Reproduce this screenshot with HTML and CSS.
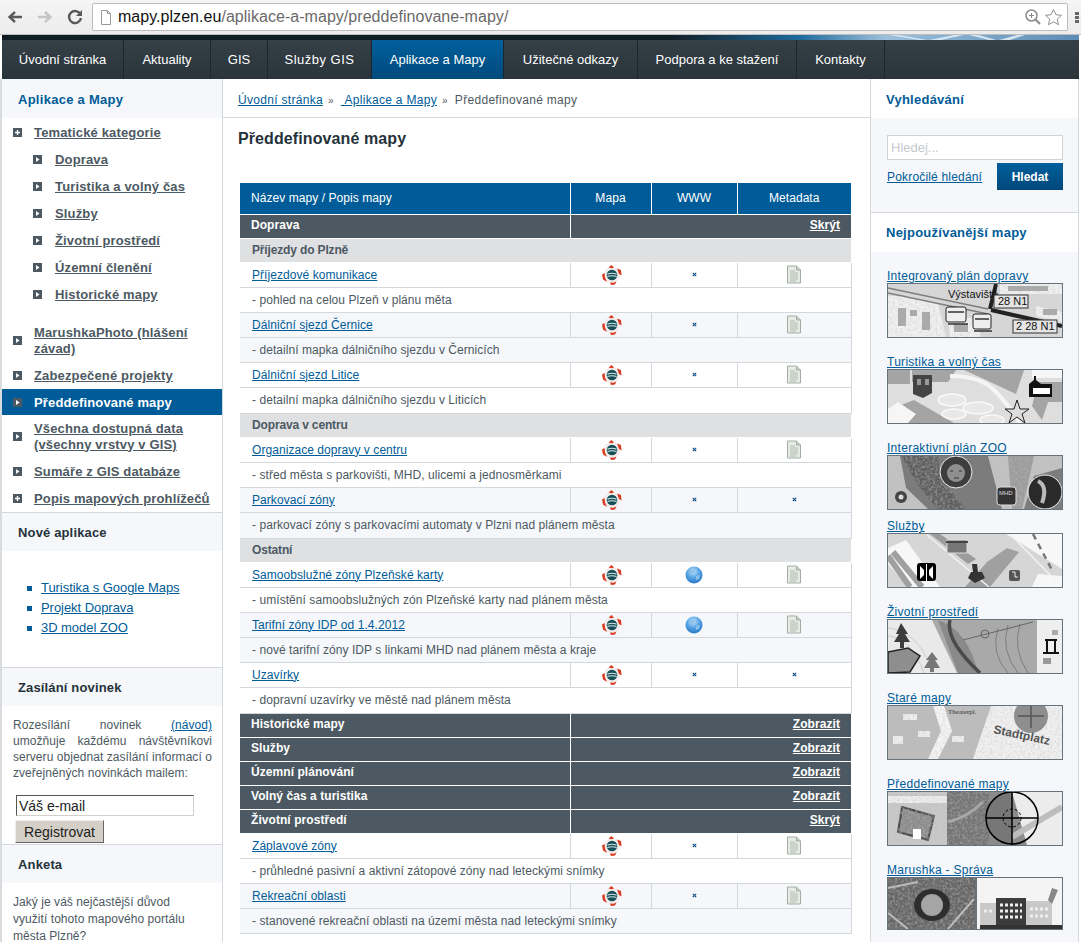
FILE: index.html
```html
<!DOCTYPE html>
<html lang="cs">
<head>
<meta charset="utf-8">
<title>Předdefinované mapy</title>
<link rel="stylesheet" href="styles.css">
</head>
<body>
<svg class="defs" width="0" height="0">
  <defs>
    <filter id="grain" x="0" y="0" width="100%" height="100%">
      <feTurbulence type="fractalNoise" baseFrequency=".4" numOctaves="2" seed="4" result="n"/>
      <feColorMatrix in="n" type="matrix" values="0 0 0 0 .5  0 0 0 0 .5  0 0 0 0 .5  1 0 0 0 -.4"/>
      <feComposite in2="SourceGraphic" operator="in" result="t"/>
      <feMerge><feMergeNode in="SourceGraphic"/><feMergeNode in="t"/></feMerge>
    </filter>
    <radialGradient id="gl" cx="45%" cy="30%" r="70%"><stop offset="0" stop-color="#c5e4fa"/><stop offset=".5" stop-color="#5aa5e6"/><stop offset="1" stop-color="#2a78c6"/></radialGradient>
  </defs>
  <symbol id="ico-map" viewBox="0 0 20 20">
    <circle cx="10" cy="10" r="8" fill="#f3ecea"/>
    <g fill="#d93a22">
      <path d="M6.500 2.500L9.500 0 12 2.500 9.500 3.200z"/>
      <path d="M15 3.500l4 1.500.5 5.500-2.500-1.500z"/>
      <path d="M14.500 16.500l-1.500 3L9 20l-1-2.500 3.500.2z"/>
      <path d="M5 17l-4-2.500L0 9.500 2.500 8l.5 4.500z"/>
    </g>
    <circle cx="10" cy="10" r="5.300" fill="#174f58"/>
    <path d="M5.400 9.300c3-1.500 6-1.500 9.200 0M5.400 11.600c3-1.200 6-1.200 9.200 0" fill="none" stroke="#d5e8e8" stroke-width="1.100"/>
  </symbol>
  <symbol id="ico-doc" viewBox="0 0 16 19">
    <path d="M1.500 1h9l4 4v13h-13z" fill="#e6ebe5" stroke="#a2aea4"/>
    <path d="M10.500 1v4h4" fill="#c4cfc5" stroke="#a2aea4"/>
    <path d="M4 6h5M4 8h8M4 10h8M4 12h8M4 14h8M4 16h6" stroke="#b0bbb1"/>
  </symbol>
  <symbol id="ico-x" viewBox="0 0 5 5">
    <path d="M.8.8l3.400 3.400M4.200.8L.8 4.200" stroke="#174f8a" stroke-width="1.200"/>
  </symbol>
  <symbol id="ico-globe" viewBox="0 0 18 18">
    <circle cx="9" cy="9" r="8.500" fill="url(#gl)"/>
    <path d="M4 6q3-3 6-2l-1 3-4 1zM11 10l4-1-1 4-3 1z" fill="#8cc0ec"/>
  </symbol>
  <symbol id="ico-plus" viewBox="0 0 9 9">
    <rect width="9" height="9" fill="#4d5962"/><path d="M4.500 2v5M2 4.500h5" stroke="#fff" stroke-width="1.400"/>
  </symbol>
  <symbol id="ico-arrow" viewBox="0 0 9 9">
    <rect width="9" height="9" fill="#4d5962"/><path d="M3 2l3.500 2.500L3 7z" fill="#fff"/>
  </symbol>
</svg>

<header class="chrome">
  <svg class="tool" width="18" height="18" viewBox="0 0 18 18"><path d="M16 9H4M9 4L3.500 9 9 14" fill="none" stroke="#5a5a5a" stroke-width="2.400"/></svg>
  <svg class="tool" width="18" height="18" viewBox="0 0 18 18"><path d="M2 9h12M9 4l5.500 5L9 14" fill="none" stroke="#c4c4c4" stroke-width="2.400"/></svg>
  <svg class="tool" width="18" height="18" viewBox="0 0 18 18"><path d="M14.500 6.500A6 6 0 1 0 15 10" fill="none" stroke="#5a5a5a" stroke-width="2.400"/><path d="M16 2v6h-6z" fill="#5a5a5a"/></svg>
  <div class="omnibox">
    <svg class="page-ico" width="12" height="15" viewBox="0 0 12 15"><path d="M1.500.5h6l3 3v11h-9z" fill="#fff" stroke="#9a9a9a"/><path d="M7.500.5v3h3" fill="none" stroke="#9a9a9a"/></svg>
    <span class="url"><b>mapy.plzen.eu</b>/aplikace-a-mapy/preddefinovane-mapy/</span>
    <svg width="18" height="18" viewBox="0 0 18 18"><circle cx="7.500" cy="7.500" r="5.500" fill="none" stroke="#8a8a8a" stroke-width="1.500"/><path d="M11.500 11.500l4.500 4.500" stroke="#8a8a8a" stroke-width="2"/><path d="M5 7.500h5M7.500 5v5" stroke="#8a8a8a"/></svg>
    <svg width="19" height="18" viewBox="0 0 19 18"><path d="M9.500 1.500l2.400 5.200 5.600.6-4.200 3.800 1.200 5.600-5-2.900-5 2.900 1.200-5.600L1.500 7.300l5.600-.6z" fill="#fff" stroke="#8f8f8f"/></svg>
  </div>
  <div class="dots"><i></i><i></i><i></i></div>
</header>

<div class="banner">
  <svg width="180" height="5" viewBox="0 0 180 5"><path d="M20 0l30 5h8L30 0zM60 5l25-5h10L72 5zM100 0l20 5h7l-17-5zM130 5l18-5h8l-15 5z" fill="#d5e4f1"/></svg>
</div>

<nav class="mainnav">
  <a href="#">Úvodní stránka</a>
  <a href="#">Aktuality</a>
  <a href="#">GIS</a>
  <a href="#" class="spaced">Služby GIS</a>
  <a href="#" class="active">Aplikace a Mapy</a>
  <a href="#">Užitečné odkazy</a>
  <a href="#">Podpora a ke stažení</a>
  <a href="#">Kontakty</a>
</nav>

<div class="layout">
  <aside class="left">
    <h2 class="lhead blue">Aplikace a Mapy</h2>
    <ul class="tree">
      <li><svg class="ti"><use href="#ico-plus"/></svg><a href="#">Tematické kategorie</a></li>
      <li class="sub"><svg class="ti"><use href="#ico-arrow"/></svg><a href="#">Doprava</a></li>
      <li class="sub"><svg class="ti"><use href="#ico-arrow"/></svg><a href="#">Turistika a volný čas</a></li>
      <li class="sub"><svg class="ti"><use href="#ico-arrow"/></svg><a href="#">Služby</a></li>
      <li class="sub"><svg class="ti"><use href="#ico-arrow"/></svg><a href="#">Životní prostředí</a></li>
      <li class="sub"><svg class="ti"><use href="#ico-arrow"/></svg><a href="#">Územní členění</a></li>
      <li class="sub last"><svg class="ti"><use href="#ico-arrow"/></svg><a href="#">Historické mapy</a></li>
      <li class="two"><svg class="ti"><use href="#ico-arrow"/></svg><a href="#">MarushkaPhoto (hlášení závad)</a></li>
      <li><svg class="ti"><use href="#ico-arrow"/></svg><a href="#">Zabezpečené projekty</a></li>
      <li class="current"><svg class="ti"><use href="#ico-arrow"/></svg><a href="#">Předdefinované mapy</a></li>
      <li class="two"><svg class="ti"><use href="#ico-arrow"/></svg><a href="#">Všechna dostupná data (všechny vrstvy v GIS)</a></li>
      <li><svg class="ti"><use href="#ico-arrow"/></svg><a href="#">Sumáře z GIS databáze</a></li>
      <li><svg class="ti"><use href="#ico-plus"/></svg><a href="#">Popis mapových prohlížečů</a></li>
    </ul>
    <h2 class="lhead">Nové aplikace</h2>
    <ul class="apps">
      <li><a href="#">Turistika s Google Maps</a></li>
      <li><a href="#">Projekt Doprava</a></li>
      <li><a href="#">3D model ZOO</a></li>
    </ul>
    <h2 class="lhead">Zasílání novinek</h2>
    <div class="news">
      <p>Rozesílání novinek <a href="#">(návod)</a> umožňuje každému návštěvníkovi serveru objednat zasílání informací o zveřejněných novinkách mailem:</p>
      <input class="mail" type="text" value="Váš e-mail">
      <button class="reg" type="button">Registrovat</button>
    </div>
    <h2 class="lhead">Anketa</h2>
    <p class="poll">Jaký je váš nejčastější důvod využití tohoto mapového portálu města Plzně?</p>
  </aside>

  <main class="content">
    <div class="crumbs"><a href="#">Úvodní stránka</a><span class="sep">»</span><a href="#">&nbsp;Aplikace a Mapy</a><span class="sep">»</span>Předdefinované mapy</div>
    <h1>Předdefinované mapy</h1>
    <table class="maps">
      <colgroup><col class="c1"><col class="c2"><col class="c3"><col class="c4"></colgroup>
      <tr class="top"><th class="name">Název mapy / Popis mapy</th><th>Mapa</th><th>WWW</th><th>Metadata</th></tr>
      <tr class="cat"><td>Doprava</td><td colspan="3"><a href="#">Skrýt</a></td></tr>
      <tr class="subcat"><td colspan="4">Příjezdy do Plzně</td></tr>
      <tr class="r"><td><a href="#">Příjezdové komunikace</a></td><td><svg class="im"><use href="#ico-map"/></svg></td><td><svg class="ix"><use href="#ico-x"/></svg></td><td><svg class="id"><use href="#ico-doc"/></svg></td></tr>
      <tr class="d"><td colspan="4">- pohled na celou Plzeň v plánu měta</td></tr>
      <tr class="r alt"><td><a href="#">Dálniční sjezd Černice</a></td><td><svg class="im"><use href="#ico-map"/></svg></td><td><svg class="ix"><use href="#ico-x"/></svg></td><td><svg class="id"><use href="#ico-doc"/></svg></td></tr>
      <tr class="d alt"><td colspan="4">- detailní mapka dálničního sjezdu v Černicích</td></tr>
      <tr class="r"><td><a href="#">Dálniční sjezd Litice</a></td><td><svg class="im"><use href="#ico-map"/></svg></td><td><svg class="ix"><use href="#ico-x"/></svg></td><td><svg class="id"><use href="#ico-doc"/></svg></td></tr>
      <tr class="d"><td colspan="4">- detailní mapka dálničního sjezdu v Liticích</td></tr>
      <tr class="subcat"><td colspan="4">Doprava v centru</td></tr>
      <tr class="r"><td><a href="#">Organizace dopravy v centru</a></td><td><svg class="im"><use href="#ico-map"/></svg></td><td><svg class="ix"><use href="#ico-x"/></svg></td><td><svg class="id"><use href="#ico-doc"/></svg></td></tr>
      <tr class="d"><td colspan="4">- střed města s parkovišti, MHD, ulicemi a jednosměrkami</td></tr>
      <tr class="r alt"><td><a href="#">Parkovací zóny</a></td><td><svg class="im"><use href="#ico-map"/></svg></td><td><svg class="ix"><use href="#ico-x"/></svg></td><td><svg class="ix"><use href="#ico-x"/></svg></td></tr>
      <tr class="d alt"><td colspan="4">- parkovací zóny s parkovacími automaty v Plzni nad plánem města</td></tr>
      <tr class="subcat"><td colspan="4">Ostatní</td></tr>
      <tr class="r"><td><a href="#">Samoobslužné zóny Plzeňské karty</a></td><td><svg class="im"><use href="#ico-map"/></svg></td><td><svg class="ig"><use href="#ico-globe"/></svg></td><td><svg class="id"><use href="#ico-doc"/></svg></td></tr>
      <tr class="d"><td colspan="4">- umístění samoobslužných zón Plzeňské karty nad plánem města</td></tr>
      <tr class="r alt"><td><a href="#">Tarifní zóny IDP od 1.4.2012</a></td><td><svg class="im"><use href="#ico-map"/></svg></td><td><svg class="ig"><use href="#ico-globe"/></svg></td><td><svg class="id"><use href="#ico-doc"/></svg></td></tr>
      <tr class="d alt"><td colspan="4">- nové tarifní zóny IDP s linkami MHD nad plánem města a kraje</td></tr>
      <tr class="r"><td><a href="#">Uzavírky</a></td><td><svg class="im"><use href="#ico-map"/></svg></td><td><svg class="ix"><use href="#ico-x"/></svg></td><td><svg class="ix"><use href="#ico-x"/></svg></td></tr>
      <tr class="d"><td colspan="4">- dopravní uzavírky ve městě nad plánem města</td></tr>
      <tr class="cat"><td>Historické mapy</td><td colspan="3"><a href="#">Zobrazit</a></td></tr>
      <tr class="cat"><td>Služby</td><td colspan="3"><a href="#">Zobrazit</a></td></tr>
      <tr class="cat"><td>Územní plánování</td><td colspan="3"><a href="#">Zobrazit</a></td></tr>
      <tr class="cat"><td>Volný čas a turistika</td><td colspan="3"><a href="#">Zobrazit</a></td></tr>
      <tr class="cat"><td>Životní prostředí</td><td colspan="3"><a href="#">Skrýt</a></td></tr>
      <tr class="r"><td><a href="#">Záplavové zóny</a></td><td><svg class="im"><use href="#ico-map"/></svg></td><td><svg class="ix"><use href="#ico-x"/></svg></td><td><svg class="id"><use href="#ico-doc"/></svg></td></tr>
      <tr class="d"><td colspan="4">- průhledné pasivní a aktivní zátopové zóny nad leteckými snímky</td></tr>
      <tr class="r alt"><td><a href="#">Rekreační oblasti</a></td><td><svg class="im"><use href="#ico-map"/></svg></td><td><svg class="ix"><use href="#ico-x"/></svg></td><td><svg class="id"><use href="#ico-doc"/></svg></td></tr>
      <tr class="d alt"><td colspan="4">- stanovené rekreační oblasti na území města nad leteckými snímky</td></tr>
    </table>
  </main>

  <aside class="right">
    <h2 class="rhead first">Vyhledávání</h2>
    <form class="search">
      <input class="q" type="text" placeholder="Hledej...">
      <div class="srow"><a href="#">Pokročilé hledání</a><button class="go" type="button">Hledat</button></div>
    </form>
    <h2 class="rhead">Nejpoužívanější mapy</h2>
    <div class="thumbs">
      <a class="thumb" href="#"><span>Integrovaný plán dopravy</span>
        <svg viewBox="0 0 174 53"><rect width="174" height="53" fill="#d6d6d6"/><g filter="url(#grain)"><path d="M0 12h20l30 8 8 33H0zM60 34h28l5 19H62zM112 0h62v10h-62zM148 22l26 6v10l-26-6z" fill="#f0f0f0"/></g><path d="M10 24h8v18h-8zM22 26h7v6h-7zM34 28h8v18h-8zM66 40h14v8H66zM120 2h40v5h-40zM155 25h14v6h-14z" fill="#aaa"/><path d="M0 4l100 21M0 9l100 21" stroke="#7e7e7e" stroke-width="1.500"/><path d="M103 26L174 42" stroke="#222" stroke-width="4"/><path d="M102 25L108 0" stroke="#222" stroke-width="4"/><g fill="#eee" stroke="#222"><rect x="58" y="23" width="20" height="15" rx="2"/><rect x="85" y="30" width="18" height="15" rx="2"/></g><path d="M60 28h16M87 35h14M60 40h20M86 47h18" stroke="#333" stroke-width="1.500"/><text x="60" y="14" class="mt">Výstaviště</text><g fill="#e4e4e4" stroke="#333"><rect x="106" y="11" width="34" height="13"/><rect x="125" y="36" width="44" height="13"/></g><text x="110" y="21" class="mt">28 N1</text><text x="128" y="46" class="mt">2 28 N1</text></svg></a>
      <a class="thumb" href="#"><span>Turistika a volný čas</span>
        <svg viewBox="0 0 174 53"><rect width="174" height="53" fill="#dedede"/><path d="M24 0h44l-8 12-36 0zM76 0h60l-8 24-30-14zM0 40l26-10 40 23H0zM150 12h24v20h-14l-6 18-10-14zM0 0h22v14H0z" fill="#a4a4a4"/><path d="M10 32l18 12-8 9H0v-14zM144 0h30v8h-30z" fill="#f6f6f6"/><g fill="#e8e8e8" stroke="#fafafa" stroke-width="1.500"><ellipse cx="64" cy="30" rx="14" ry="6"/><ellipse cx="90" cy="38" rx="15" ry="6"/><ellipse cx="66" cy="44" rx="12" ry="5"/><ellipse cx="104" cy="50" rx="12" ry="5"/></g><path d="M62 6q30 0 44 14t26 33" fill="none" stroke="#f5f5f5" stroke-width="4"/><path d="M25 5h19v18l-9 5-10-4z" fill="#444"/><path d="M29 9h4v6h-4zM37 9h4v6h-4z" fill="#999"/><path d="M141 14l5-4v-4h2v4l5 4h11v13h-23z" fill="#111"/><path d="M145 18h17v6h-17z" fill="#fff"/><path d="M129 30l3 9h9l-7 5 3 9-8-6-8 6 3-9-7-5h9z" fill="#ddd" stroke="#222"/></svg></a>
      <a class="thumb zoo" href="#"><span>Interaktivní plán ZOO</span>
        <svg viewBox="0 0 174 53"><rect width="174" height="53" fill="#7c7c7c"/><g filter="url(#grain)"><path d="M0 0h12l6 32 22 21H0zM100 0h74v12l-28 8-10 33h-22q-8-30-14-53z" fill="#c2c2c2"/><path d="M14 0q10 25 36 53h28L52 22 50 0z" fill="#5f5f5f"/><path d="M120 0h26l-6 28-6 25h-10z" fill="#9c9c9c"/></g><circle cx="68" cy="16" r="16" fill="#3e3e3e" stroke="#eee"/><circle cx="68" cy="17" r="9" fill="#8f8f8f"/><path d="M62 15h3M71 15h3M66 22h5" stroke="#333"/><circle cx="157" cy="36" r="17" fill="#2a2a2a" stroke="#eee"/><path d="M150 25q10 5 4 22" stroke="#bbb" stroke-width="4" fill="none"/><rect x="109" y="31" width="19" height="18" rx="3" fill="#333" stroke="#ddd"/><text x="111" y="39" class="xs">MHD</text><circle cx="13" cy="41" r="6" fill="#444"/><circle cx="13" cy="41" r="2.500" fill="#ddd"/></svg></a>
      <a class="thumb" href="#"><span>Služby</span>
        <svg viewBox="0 0 174 53"><rect width="174" height="53" fill="#d6d6d6"/><path d="M0 14l18-8 34 47H20L0 30zM118 0h56v35zM150 40l24 2v11h-30z" fill="#f7f7f7"/><path d="M0 22L22 53M5 18L34 53" stroke="#a0a0a0" stroke-width="6"/><path d="M52 0l36 25-8 5L42 0z" fill="#9c9c9c"/><path d="M102 53h-25l22-25 20-14 12 4-20 24z" fill="#a0a0a0"/><path d="M39 1l62 52M122 0l52 53" stroke="#f2f2f2" stroke-width="1.500"/><path d="M145 0l20 38" stroke="#777" stroke-width="2.500" stroke-dasharray="6 5"/><rect x="59" y="6" width="20" height="13" fill="#777" stroke="#ddd"/><path d="M58 8h22" stroke="#444" stroke-width="2"/><rect x="29" y="29" width="19" height="18" rx="3" fill="#000"/><path d="M32 32l4 4v5l-4 4zM45 32l-4 4v5l4 4zM38 30h1v17h-1z" fill="#fff"/><path d="M84 30h5l1 8h4l3 6-10 5-7-5 3-6h2z" fill="#333"/><rect x="121" y="36" width="11" height="11" rx="2" fill="#555"/><path d="M124 38h3v5h3" stroke="#eee" fill="none"/></svg></a>
      <a class="thumb" href="#"><span>Životní prostředí</span>
        <svg viewBox="0 0 174 53"><rect width="174" height="53" fill="#a9a9a9"/><path d="M0 0h44l25 53H0z" fill="#e9e9e9"/><path d="M149 0h25v53h-25z" fill="#eeeeee"/><path d="M50 0q30 10 40 53h-20z" fill="#8a8a8a"/><path d="M0 8q30 2 45 45M0 16q24 2 36 37" fill="none" stroke="#ccc"/><path d="M0 32l20-4 12 8-10 16-22 1z" fill="#8e8e8e" stroke="#222" stroke-width="1.500"/><path d="M62 0q-5 20 30 53" fill="none" stroke="#4a4a4a" stroke-width="3.500"/><path d="M120 5q-8 25 10 48M132 4q-8 25 8 49M110 8q-8 25 10 45" stroke="#7d7d7d" fill="none"/><path d="M75 20l70-18" stroke="#666"/><circle cx="97" cy="14" r="4" fill="none" stroke="#666"/><path d="M13 3l7 11h-3l5 8h-6v6h-4v-6H6l5-8H8z" fill="#3c3c3c"/><path d="M44 32l6 8h-3l5 8h-6v4h-4v-4h-6l5-8h-3z" fill="#777"/><path d="M157 20h12M159 20v13M167 20v13M155 33h16" stroke="#111" stroke-width="2"/><rect x="155" y="38" width="8" height="6" fill="#999"/><rect x="164" y="10" width="6" height="5" fill="#aaa"/></svg></a>
      <a class="thumb" href="#"><span>Staré mapy</span>
        <svg viewBox="0 0 174 53"><rect width="174" height="53" fill="#bcbcbc"/><g filter="url(#grain)"><path d="M85 53l18-53h71v53z" fill="#f0f0f0"/><path d="M45 0l8 25L40 53h10l14-28L56 0z" fill="#f4f4f4"/><path d="M15 8h14v6H15zM30 25h12v6H30zM5 30h10v8H5zM64 30h12v6H64z" fill="#ededed"/></g><circle cx="143" cy="10" r="17" fill="#8e8e8e"/><path d="M130 10h26M143 0v22" stroke="#555" stroke-width="1.500"/><text x="60" y="8" class="mo">Theaterpl.</text><text x="105" y="27" class="sp" transform="rotate(12 105 27)">Stadtplatz</text></svg></a>
      <a class="thumb" href="#"><span>Předdefinované mapy</span>
        <svg viewBox="0 0 174 53"><rect width="174" height="53" fill="#8b8b8b"/><g filter="url(#grain)"><rect width="59" height="53" fill="#c8c8c8"/><path d="M0 4h59v7H0z" fill="#ececec"/><path d="M14 15l32 9-6 24-30-8z" fill="#8c8c8c" stroke="#444" stroke-width="2"/><rect x="59" width="42" height="53" fill="#747474"/></g><rect x="25" y="37" width="8" height="10" fill="#fff"/><path d="M60 30q20-5 35-20" stroke="#a8a8a8" stroke-width="3" fill="none"/><path d="M124 0h50v53h-35z" fill="#ececec"/><path d="M124 45L174 15" stroke="#bdbdbd" stroke-width="6"/><path d="M98 26a26 26 0 0 1 26-26v53a26 26 0 0 1-26-27z" fill="#777"/><circle cx="124" cy="26" r="26" fill="none" stroke="#000" stroke-width="1.500"/><path d="M98 26h52M124 0v53" stroke="#000" stroke-width="1.500"/><circle cx="124" cy="26" r="9" fill="none" stroke="#000" stroke-dasharray="3 2"/></svg></a>
      <a class="thumb last" href="#"><span>Marushka - Správa</span>
        <svg viewBox="0 0 174 51"><g filter="url(#grain)"><rect width="87" height="51" fill="#666"/></g><ellipse cx="44" cy="27" rx="18" ry="16" fill="#2e2e2e"/><ellipse cx="44" cy="27" rx="11" ry="11" fill="#a5a5a5"/><path d="M0 10l30-6M60 51l26-30M0 35l20 16" stroke="#bbb" stroke-width="2"/><rect x="88" width="86" height="51" fill="#f4f4f4"/><rect x="87" width="2" height="51" fill="#68727a"/><path d="M108 20h30v31h-30z" fill="#3c3c3c"/><path d="M92 25h16v26H92zM138 23h26v28h-26z" fill="#c9c9c9"/><path d="M92 47h82v4H92z" fill="#333"/><path d="M112 27h22M112 33h22M112 39h22M96 33h8M142 31h18M142 38h18" stroke="#eee" stroke-dasharray="3 2" stroke-width="3"/><path d="M160 22l4-12 6 2-6 14z" fill="#888"/></svg></a>
    </div>
  </aside>
</div>
</body>
</html>
```
FILE: styles.css
```css
* { box-sizing: border-box; }
html, body { margin: 0; padding: 0; height: 942px; overflow: hidden; }
body { background: #fff; font-family: "Liberation Sans", Arial, sans-serif; font-size: 12px; color: #4d5962; width: 1081px; }
.defs { display: block; height: 0; }
a { color: #005c98; }

/* browser chrome */
.chrome { height: 35px; background: linear-gradient(#f5f5f5, #ececec); display: flex; align-items: center; padding: 0 0 0 6px; gap: 12px; border-bottom: 1px solid #bdbdbd; }
.tool { flex: none; }
.omnibox { margin-left: -4px; width: 976px; height: 28px; background: #fff; border: 1px solid #bcbcbc; border-radius: 2px; display: flex; align-items: center; gap: 2px; padding: 0 4px 0 7px; }
.page-ico { flex: none; margin-right: 4px; }
.url { flex: 1; font-size: 16px; letter-spacing: .04px; color: #6a6a6a; white-space: nowrap; }
.url b { font-weight: 400; color: #111; }
.dots { display: flex; flex-direction: column; gap: 1px; margin-left: -5px; }
.dots i { display: block; width: 4px; height: 3px; background: #666; }

.banner { margin: 0 2px; height: 5px; background: linear-gradient(90deg, #111d24 0, #111d24 62%, #1e6a9c 74%, #9cc0dc 82%, #5b8cb6 100%); display: flex; justify-content: flex-end; padding-right: 30px; }
.banner svg { display: block; }

/* main menu */
.mainnav { margin: 0 2px; height: 39px; background: linear-gradient(#353f46, #2a343b); display: grid; grid-template-columns: 122px 87px 57px 104px 132px 134px 159px 88px 1fr; }
.mainnav a { display: flex; align-items: center; justify-content: center; color: #fff; text-decoration: none; font-size: 13px; border-right: 1px solid #1d262c; }
.mainnav a.spaced { letter-spacing: .5px; }
.mainnav a.active { background: linear-gradient(#005f9c, #014a7c); }

/* columns */
.layout { display: grid; grid-template-columns: 223px 647px 209px; }
.left { border-left: 2px solid #d8dcdf; border-right: 1px solid #d5d8db; height: 900px; }
.right { background: #f5f7fa; border-left: 1px solid #d5d8db; border-right: 1px solid #d5d8db; height: 900px; }

/* left */
.lhead { margin: 0; height: 39px; line-height: 39px; padding-left: 16px; font-size: 13px; font-weight: 700; letter-spacing: .15px; color: #26323a; background: #f5f7fa; border-top: 1px solid #d5d8db; }
.lhead.blue { color: #005c98; border-top: 0; letter-spacing: .27px; line-height: 41px; }
.tree { list-style: none; margin: 0; padding: 1px 0 0; height: 394px; }
.tree li { display: flex; align-items: center; height: 27px; padding-left: 11px; font-size: 13px; font-weight: 700; letter-spacing: .15px; }
.tree a { color: #4d5962; }
.ti { width: 9px; height: 9px; flex: none; margin-right: 12px; }
.tree .sub { padding-left: 31px; }
.tree .sub a { margin-left: 1px; }
.tree .last { margin-bottom: 11px; }
.tree .two { height: 43px; line-height: 16px; }
.tree .two a { width: 175px; }
.tree .current { background: #005c98; height: 26px; }
.tree .current a { color: #fff; text-decoration: none; }
.apps { margin: 0; padding: 27px 0 0 39px; list-style: none; font-size: 13px; letter-spacing: -.05px; height: 116px; }
.apps li { position: relative; height: 20px; line-height: 20px; }
.apps li::before { content: ""; position: absolute; left: -14px; top: 8px; width: 5px; height: 5px; background: #005c98; }
.news { height: 138px; padding: 11px 0 0 11px; }
.news p { margin: 0 10px 14px 0; line-height: 16px; font-size: 12px; letter-spacing: .05px; text-align: justify; color: #4d5962; }
.mail { display: block; width: 178px; height: 21px; margin: 0 0 4px 3px; padding: 0 2px; font: 14px "Liberation Sans", Arial, sans-serif; color: #222; border: 1px solid #d4d0c8; border-top-color: #555; border-left-color: #555; background: #fff; }
.reg { display: block; margin-left: 2px; width: 89px; height: 23px; padding: 0; font: 14px "Liberation Sans", Arial, sans-serif; color: #222; background: #d4d0c8; border: 1px solid #666; border-top-color: #eee; border-left-color: #eee; }
.poll { margin: 11px 0 0 11px; width: 188px; line-height: 17px; font-size: 12px; letter-spacing: .05px; }

/* center */
.crumbs { height: 39px; padding: 0 0 0 15px; line-height: 42px; font-size: 12px; letter-spacing: .3px; border-bottom: 1px solid #d5d8db; }
.sep { margin: 0 7px 0 5px; font-size: 10px; }
h1 { margin: 11px 0 0 15px; height: 54px; font-size: 16px; font-weight: 700; line-height: 19px; letter-spacing: .1px; color: #26323a; }
.maps { margin: 0 0 0 17px; width: 611px; table-layout: fixed; border-collapse: collapse; font-size: 12px; letter-spacing: .06px; }
.c1 { width: 330px; } .c2 { width: 81px; } .c3 { width: 86px; } .c4 { width: 114px; }
.maps th { height: 31px; background: #005c98; color: #fff; font-weight: 400; text-align: center; border-right: 1px solid #fff; border-bottom: 1px solid #fff; }
.maps th:last-child { border-right: 0; }
.maps th.name { text-align: left; padding-left: 11px; }
.cat td { height: 24px; background: #4d5962; color: #fff; font-weight: 700; padding: 0 11px 2px; border-bottom: 1px solid #fff; }
.cat td:first-child { border-right: 1px solid #fff; }
.cat td:last-child { text-align: right; }
.cat a { color: #fff; }
.subcat td { height: 24px; background: #dfe0e2; font-weight: 700; letter-spacing: -.15px; padding: 0 12px; border-bottom: 1px solid #fff; color: #4d5962; }
.r td { height: 25px; padding: 0; text-align: center; line-height: 0; border: 1px solid #d5d8db; border-top: 0; background: #fff; }
.r td:first-child { text-align: left; padding-left: 12px; line-height: 16px; border-left: 0; }
.d td { height: 25px; padding: 0 12px; border: 1px solid #d5d8db; border-top: 0; border-left: 0; background: #fff; }
.d:has(+ .subcat) td, .d:has(+ .cat) td { height: 26px; }
.alt td { background: #f5f7fa; }
.im { width: 20px; height: 20px; margin-left: 2px; }
.ix { width: 5px; height: 5px; }
.id { width: 16px; height: 19px; }
.ig { width: 18px; height: 18px; }

/* right */
.rhead { margin: 0; height: 39px; line-height: 41px; padding-left: 15px; background: #fff; font-size: 13px; font-weight: 700; letter-spacing: .25px; color: #005c98; }
.rhead:not(.first) { height: 40px; line-height: 40px; border-top: 1px solid #d5d8db; }
.search { height: 94px; padding: 17px 15px 0 16px; }
.q { display: block; width: 176px; height: 25px; border: 1px solid #cfd3d6; background: #fff; padding: 0 3px; font: 13px "Liberation Sans", Arial, sans-serif; }
.q::placeholder { color: #c4c8cc; }
.srow { display: flex; justify-content: space-between; align-items: center; margin-top: 3px; }
.srow a { font-size: 12px; letter-spacing: .18px; }
.go { width: 66px; height: 27px; padding: 0; border: 0; background: linear-gradient(#005f9c, #01487a); color: #fff; font: 700 12px "Liberation Sans", Arial, sans-serif; }
.thumbs { padding: 16px 15px 0 16px; }
.thumb { display: block; margin-bottom: 16px; font-size: 12px; letter-spacing: .28px; line-height: 16px; text-decoration: none; }
.thumb span { text-decoration: underline; display: block; height: 15px; }
.thumb svg { display: block; width: 176px; height: 55px; border: 1px solid #68727a; background: #ccc; letter-spacing: 0; }
.thumb.zoo { margin-bottom: 8px; }
.thumb.last { margin-bottom: 0; }
.thumb.last svg { height: 53px; }
.mt { font: 11px "Liberation Sans", Arial, sans-serif; fill: #111; }
.xs { font: 6px "Liberation Sans", Arial, sans-serif; fill: #ddd; }
.mo { font: 7px "Liberation Serif", serif; fill: #333; }
.sp { font: 700 12px "Liberation Sans", Arial, sans-serif; fill: #555; }
```
